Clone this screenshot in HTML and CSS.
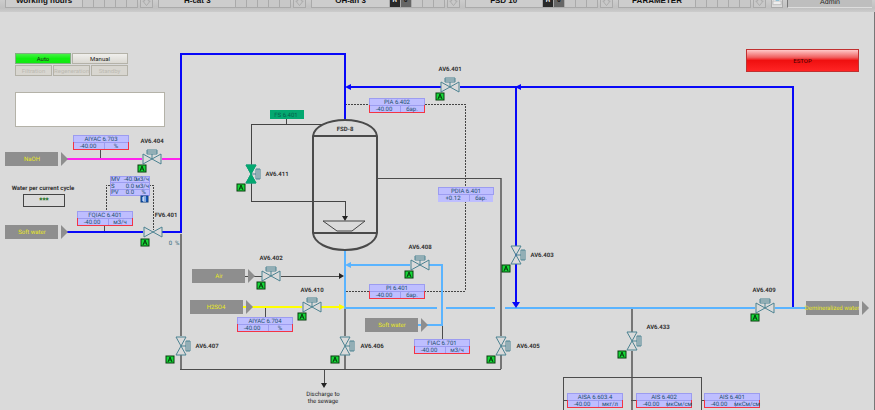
FILE: index.html
```html
<!DOCTYPE html>
<html lang="en">
<head>
<meta charset="utf-8">
<title>FSD-8 process overview</title>
<link rel="stylesheet" href="styles.css">
</head>
<body>
<header class="toolbar">
  <nav class="groups">
    <div class="group"><button class="name">Working hours</button><i class="cell"></i><i class="cell"></i><i class="cell"></i><i class="cell"></i><i class="cell"></i><button class="ack" aria-label="Acknowledge"><svg viewBox="0 0 12 12"><path d="M4 0v6H2l4 5 4-5H8V0"/></svg></button></div>
    <div class="group"><button class="name">H-cat 3</button><i class="cell"></i><i class="cell"></i><i class="cell"></i><i class="cell"></i><i class="cell"></i><button class="ack" aria-label="Acknowledge"><svg viewBox="0 0 12 12"><path d="M4 0v6H2l4 5 4-5H8V0"/></svg></button></div>
    <div class="group"><button class="name">OH-an 3</button><i class="cell dark">H</i><i class="cell dim">0</i><i class="cell"></i><i class="cell"></i><i class="cell"></i><button class="ack" aria-label="Acknowledge"><svg viewBox="0 0 12 12"><path d="M4 0v6H2l4 5 4-5H8V0"/></svg></button></div>
    <div class="group"><button class="name">FSD 10</button><i class="cell dark">H</i><i class="cell dim">0</i><i class="cell"></i><i class="cell"></i><i class="cell"></i><button class="ack" aria-label="Acknowledge"><svg viewBox="0 0 12 12"><path d="M4 0v6H2l4 5 4-5H8V0"/></svg></button></div>
    <div class="group"><button class="name">PARAMETER</button><i class="cell"></i><i class="cell"></i><i class="cell"></i><i class="cell"></i><i class="cell"></i><button class="ack" aria-label="Acknowledge"><svg viewBox="0 0 12 12"><path d="M4 0v6H2l4 5 4-5H8V0"/></svg></button></div>
  </nav>
  <button class="print" aria-label="Print"><svg viewBox="0 0 12 12"><path fill="#fff" d="M2 0h7v6H2z"/><path fill="#70c8ee" d="M4 2h4v4H4z"/><path fill="#eee" stroke="#bbb" d="M1 6h9v4H1z"/></svg></button>
  <div class="user">Admin</div>
</header>
<main class="plant">
  <svg class="schema" viewBox="0 12 875 398" preserveAspectRatio="xMinYMin meet">
    <defs>
      <g id="bow"><path d="M-9-5V5L9-5V5Z"/></g>
      <g id="valve"><use href="#bow"/><path d="M0 0V-5M-5-9H5V-5H-5ZM-5-7H5"/></g>
      <g id="auto"><rect width="8" height="7"/><path d="M2 6L4 1L6 6M3 4H5"/></g>
      <g id="source"><rect width="53" height="14"/><path d="M56 0L63 7L56 14Z"/></g>
      <g id="tag"><rect class="face" width="55" height="15"/><path class="rule" d="M0 0H55V7H0ZM31 7V14"/></g>
      <g id="alarm"><use href="#tag"/><path class="limit" d="M0 7V14H55V7"/></g>
    </defs>

    <g class="pipe heavy">
      <path d="M181 234V336M181 355V369M501 369V355M501 336V178"/>
      <path d="M345 308V336M345 355V369M632 308V332M632 351V410"/>
    </g>
    <g class="pipe grey">
      <path d="M180 369H501M501 178H377M324 369V384"/>
      <path d="M563 410V377H701V410M563 400H567M631 400H636M701 400H704"/>
      <path d="M100 149V158M104 225V232M265 308V317M442 325V339"/>
      <path d="M244 276H262M281 276H341"/>
    </g>
    <g class="pipe thin"><path d="M286 119V124M322 124H251V165M251 183V201H345V218"/></g>
    <g class="heads"><path d="M324 388L321 383H327ZM344 276L339 273V279ZM345 221L342 216H348Z"/></g>
    <g class="pipe dash">
      <path d="M345 104H369M425 104H465V187M465 201V291H424M369 291H345"/>
      <path d="M106 210V185H110M149 185H153V230"/>
    </g>
    <path class="pipe magenta" d="M67 159H142M162 159H180"/>
    <g class="pipe sky">
      <path d="M345 250V308H437M446 308H495M505 308H755M775 308H806"/>
      <path d="M348 265H410M429 265H442V325H427M418 325H421"/>
    </g>
    <path class="skyhead" d="M345 265L351 262V268Z"/>
    <path class="pipe yellow" d="M242 307H302M321 307H341"/>
    <path class="yellowhead" d="M345 307L339 304V310Z"/>
    <g class="pipe blue">
      <path d="M67 232H143M162 232H181V54H345V120"/>
      <path d="M348 87H441M460 87H793V307M516 87V304"/>
    </g>
    <path class="bluehead" d="M345 87L351 84V90ZM515 87L521 84V90ZM516 308L512 302H520Z"/>

    <g class="tank">
      <path d="M313 136C314 127 327 120 345 120S376 127 377 136V233C376 243 362 250 345 250S314 243 313 233ZM313 136H377M313 233H377"/>
      <path class="tray" d="M323 221H365L352 231H337Z"/>
    </g>

    <g class="valves">
      <use href="#valve" x="450" y="87"/><use href="#valve" x="152" y="159"/><use href="#bow" x="153" y="232"/>
      <use href="#valve" x="271" y="276"/><use href="#valve" x="312" y="307"/><use href="#valve" x="420" y="265"/><use href="#valve" x="765" y="308"/>
      <use href="#valve" transform="translate(516 255) rotate(90)"/>
      <use href="#valve" transform="translate(181 346) rotate(90)"/>
      <use href="#valve" transform="translate(345 346) rotate(90)"/>
      <use href="#valve" transform="translate(501 346) rotate(90)"/>
      <use href="#valve" transform="translate(632 341) rotate(90)"/>
      <use href="#valve" transform="translate(251 174) rotate(90)"/>
      <use class="open" href="#bow" transform="translate(251 174) rotate(90)"/>
    </g>
    <g class="autos">
      <use href="#auto" x="436" y="93"/><use href="#auto" x="138" y="165"/><use href="#auto" x="141" y="239"/>
      <use href="#auto" x="257" y="282"/><use href="#auto" x="298" y="313"/><use href="#auto" x="405" y="271"/>
      <use href="#auto" x="751" y="314"/><use href="#auto" x="237" y="184"/><use href="#auto" x="502" y="265"/>
      <use href="#auto" x="166" y="356"/><use href="#auto" x="331" y="356"/><use href="#auto" x="487" y="356"/><use href="#auto" x="618" y="351"/>
    </g>

    <g class="labels">
      <text x="450" y="71">AV6.401</text><text x="152" y="143">AV6.404</text><text x="166" y="217">FV6.401</text>
      <text x="277" y="176">AV6.411</text><text x="271" y="260">AV6.402</text><text x="312" y="292">AV6.410</text>
      <text x="420" y="249">AV6.408</text><text x="542" y="257">AV6.403</text><text x="764" y="292">AV6.409</text>
      <text x="658" y="329">AV6.433</text><text x="207" y="348">AV6.407</text><text x="372" y="348">AV6.406</text>
      <text x="528" y="348">AV6.405</text><text x="345" y="131">FSD-8</text>
      <text x="43" y="190">Water per current cycle</text>
    </g>
    <g class="notes"><text x="323" y="396">Discharge to</text><text x="323" y="403">the sewage</text></g>
    <text class="percent" x="174" y="245">0  %</text>

    <g class="sources">
      <g transform="translate(5 152)"><use href="#source"/><text x="27" y="9">NaOH</text></g>
      <g transform="translate(5 225)"><use href="#source"/><text x="27" y="9">Soft water</text></g>
      <g transform="translate(192 269)"><use href="#source"/><text x="27" y="9">Air</text></g>
      <g transform="translate(190 300)"><use href="#source"/><text x="26" y="9">H2SO4</text></g>
      <g transform="translate(365 318)"><use href="#source"/><text x="27" y="9">Soft water</text></g>
      <g transform="translate(806 301)"><use href="#source"/><text x="26" y="9">Demineralized water</text></g>
    </g>

    <g class="tags">
      <g transform="translate(73 135)"><use href="#alarm"/><text x="28" y="6">AIYAC 6.703</text><text x="15" y="13">-40.00</text><text x="43" y="13">%</text></g>
      <g transform="translate(77 211)"><use href="#alarm"/><text x="28" y="6">FQIAC 6.401</text><text x="15" y="13">-40.00</text><text x="43" y="13">м3/ч</text></g>
      <g transform="translate(369 98)"><use href="#alarm"/><text x="28" y="6">PIA 6.402</text><text x="15" y="13">-40.00</text><text x="43" y="13">бар.</text></g>
      <g transform="translate(438 187)"><use href="#tag"/><text x="28" y="6">PDIA 6.401</text><text x="15" y="13">+0.12</text><text x="43" y="13">бар.</text></g>
      <g transform="translate(369 284)"><use href="#alarm"/><text x="28" y="6">PI 6.401</text><text x="15" y="13">-40.00</text><text x="43" y="13">бар.</text></g>
      <g transform="translate(414 339)"><use href="#alarm"/><text x="28" y="6">FIAC 6.701</text><text x="15" y="13">-40.00</text><text x="43" y="13">м3/ч</text></g>
      <g transform="translate(237 317)"><use href="#alarm"/><text x="28" y="6">AIYAC 6.704</text><text x="15" y="13">-40.00</text><text x="43" y="13">%</text></g>
      <g transform="translate(567 393)"><use href="#alarm"/><text x="28" y="6">AISA 6.603.4</text><text x="15" y="13">-40.00</text><text x="43" y="13">мкг/л</text></g>
      <g transform="translate(636 393)"><use href="#alarm"/><text x="28" y="6">AIS 6.402</text><text x="15" y="13">-40.00</text><text x="43" y="13">мкСм/см</text></g>
      <g transform="translate(704 393)"><use href="#alarm"/><text x="28" y="6">AIS 6.401</text><text x="15" y="13">-40.00</text><text x="43" y="13">мкСм/см</text></g>
      <g transform="translate(110 176)">
        <rect class="face" width="39" height="19"/><path class="rule" d="M0 0H39V19H0ZM0 6H39M0 13H39"/>
        <text class="start" x="1" y="5">MV</text><text class="end" x="27" y="5">-40.0</text><text class="end" x="39" y="5">м3/ч</text>
        <text class="start" x="1" y="12">S</text><text class="end" x="24" y="12">0.0</text><text class="end" x="39" y="12">м3/ч</text>
        <text class="start" x="1" y="18">PV</text><text class="end" x="24" y="18">0.0</text><text class="end" x="36" y="18">%</text>
      </g>
    </g>
    <g class="external"><rect x="141" y="196" width="7" height="6"/><path d="M146 197H143V201H146M143 199H146"/></g>
    <g class="switch"><rect x="270" y="110" width="34" height="9"/><text x="286" y="117">FS 6.401</text></g>
  </svg>

  <section class="panel">
    <div class="modes">
      <button class="key auto">Auto</button><button class="key">Manual</button>
    </div>
    <div class="modes">
      <button class="key" disabled>Filtration</button><button class="key" disabled>Regeneration</button><button class="key" disabled>Standby</button>
    </div>
    <textarea class="log" aria-label="Messages" readonly></textarea>
  </section>
  <output class="cycle" aria-label="Water per current cycle">***</output>
  <button class="estop">ESTOP</button>
</main>
</body>
</html>
```

FILE: styles.css
```css
* { box-sizing: border-box; }
body {
  margin: 0;
  min-height: 100vh;
  overflow: hidden;
  background: linear-gradient(#777, #777) right / 1px 100% no-repeat #dadada;
  font: 6px/8px Roboto, "Liberation Sans", Arial, sans-serif;
  text-rendering: geometricPrecision;
  color: #222;
}
button { font: inherit; color: inherit; padding: 0; margin: 0; border: 0; }

/* Toolbar */
.toolbar {
  display: flex;
  align-items: flex-end;
  height: 12px;
  padding: 0 3px 4px 5px;
  overflow: hidden;
  background: linear-gradient(#cccccc, #c0c0c0 8px, #cccccc);
  font-family: "Liberation Sans", Arial, sans-serif;
}
.groups { display: flex; flex: 1; }
.group { display: flex; flex: 1; align-items: flex-end; padding-right: 5px; }
.name, .cell, .ack, .print { height: 14px; background: #c8c8c8; border: 1px solid #aaa; }
.name { flex: 1; font-weight: bold; font-size: 8px; color: #111; background: #cdcdcd; }
.cell { width: 11px; border-left: 0; font: bold 6px/12px "Liberation Sans", sans-serif; text-align: center; }
.dark { background: #292929; color: #fff; }
.dim { background: #666; color: #111; }
.ack { width: 13px; margin-left: 2px; }
.ack svg, .print svg { display: block; width: 11px; height: 12px; }
.ack path { fill: none; stroke: #aaa; }
.print { width: 12px; margin-right: 4px; background: #ddd; }
.user {
  width: 85px;
  height: 14px;
  padding-top: 5px;
  border-left: 1px solid #777;
  border-bottom: 1px solid #ddd;
  background: #bebebe;
  font-size: 7px;
  text-align: center;
}

/* Process diagram */
.plant { position: relative; }
.schema { display: block; width: 100%; }
.schema text { text-anchor: middle; white-space: pre; }
.pipe { fill: none; stroke-width: 2; shape-rendering: crispEdges; }
.heavy { stroke: #767676; }
.grey { stroke: #4c4c4c; stroke-width: 1; }
.thin { stroke: #444; stroke-width: 1; }
.dash { stroke: #444; stroke-width: 1; stroke-dasharray: 2 1; }
.magenta { stroke: #ff22ee; }
.sky { stroke: #5ab4ff; }
.yellow { stroke: #ffff00; }
.blue { stroke: #0808f8; }
.heads { fill: #222; }
.skyhead { fill: #5ab4ff; }
.yellowhead { fill: #ffff00; }
.bluehead { fill: #0808f8; }
.tank { fill: none; stroke: #4a4a4a; stroke-width: 2; }
.tank .tray { stroke: #444; stroke-width: 1; }
.valves { fill: #dadada; stroke: #4b8291; stroke-width: 1; }
.valves .open { fill: #04a870; stroke: #04a870; }
.autos { fill: #16d838; stroke: #063c0c; stroke-width: 1; }
.autos rect { stroke: #2a7a38; }
.labels { font-weight: bold; fill: #333; }
.notes { fill: #222; }
.percent { fill: #2f6678; }
.sources { fill: #8e8e8e; }
.sources text { fill: #e8e820; }
.face { fill: #bebeff; }
.rule { fill: none; stroke: #9c9cf0; shape-rendering: crispEdges; }
.limit { fill: none; stroke: #f43444; shape-rendering: crispEdges; }
.tags text { fill: #24506e; }
.schema .start { text-anchor: start; }
.schema .end { text-anchor: end; }
.external { fill: #1058c0; stroke: #fff; }
.external rect { stroke: #104080; }
.switch { fill: #04a870; }
.switch text { fill: #05604c; }

/* Operator controls placed over the diagram */
.panel {
  position: absolute;
  top: 41px;
  left: 15px;
  display: flex;
  flex-direction: column;
  gap: 1px;
  width: 150px;
}
.modes { display: flex; gap: 1px; width: 113px; }
.key {
  flex: 1 1 0;
  min-width: 0;
  height: 11px;
  border: 1px solid #b4b2a8;
  background: linear-gradient(#f0efec, #dad8d2);
  color: #222;
}
.key:disabled { color: #bcbab2; background: #d8d6d0; }
.auto { background: linear-gradient(#48f048, #10f010 50%, #12e812); border-color: #80b080; }
.log {
  height: 35px;
  margin: 15px 0 0;
  padding: 1px;
  border: 1px solid #b4b2a8;
  background: #fff;
  resize: none;
}
.cycle {
  position: absolute;
  top: 182px;
  left: 23px;
  width: 42px;
  height: 13px;
  border: 1px solid #444;
  color: #1c7020;
  font: bold 8px/12px "Liberation Sans", sans-serif;
  text-align: center;
}
.estop {
  position: absolute;
  top: 37px;
  right: 16px;
  width: 113px;
  height: 23px;
  border: 1px solid #c03030;
  background: linear-gradient(#ffc8c8, #f06060 35%, #f01010 50%, #ff2424);
  color: #400;
}
```
